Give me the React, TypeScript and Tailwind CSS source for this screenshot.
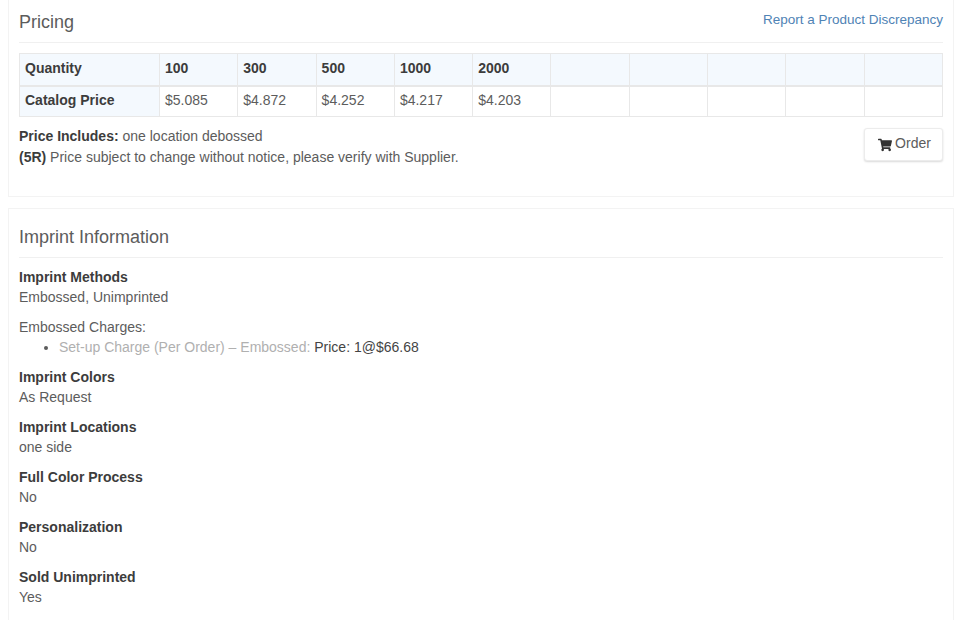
import { FaShoppingCart } from "react-icons/fa";

const QTY = ["100", "300", "500", "1000", "2000", "", "", "", "", ""];
const PRICES = ["$5.085", "$4.872", "$4.252", "$4.217", "$4.203", "", "", "", "", ""];

const INFO = [
  { label: "Imprint Colors", value: "As Request" },
  { label: "Imprint Locations", value: "one side" },
  { label: "Full Color Process", value: "No" },
  { label: "Personalization", value: "No" },
  { label: "Sold Unimprinted", value: "Yes" },
];

function Info({ label, value }: { label: string; value: string }) {
  return (
    <div className="mb-2.5 leading-[20px]">
      <div className="font-bold text-[#3c3c3c]">{label}</div>
      <div>{value}</div>
    </div>
  );
}

export default function App() {
  return (
    <div className="h-[620px] overflow-hidden bg-white pl-2 pr-[2px] font-['Liberation_Sans',Arial,sans-serif] text-[14px] text-[#5c5c5c]">
      {/* Pricing */}
      <div className="h-[197px] border border-t-0 border-[#f3f3f3] px-2.5">
        <div className="flex h-[43px] items-start justify-between border-b border-[#f0f0f0]">
          <h3 className="mt-[11px] text-[18px] leading-[23px]">Pricing</h3>
          <a href="#" className="mt-[10px] text-[13.5px] leading-[20px] text-[#4f83b5]">Report a Product Discrepancy</a>
        </div>
        <table className="mt-2.5 w-[924px] table-fixed border-collapse">
          <colgroup>
            <col className="w-[140px]" />
            {QTY.map((_, i) => <col key={i} />)}
          </colgroup>
          <tbody>
            <tr className="h-[32px] bg-[#f4f9fe] font-bold text-[#3c3c3c]">
              <td className="border border-b-2 border-[#e8e8e8] px-[5px] pb-[2px]">Quantity</td>
              {QTY.map((q, i) => (
                <td key={i} className="border border-b-2 border-[#e8e8e8] px-[5px] pb-[2px]">{q}</td>
              ))}
            </tr>
            <tr className="h-[31px]">
              <td className="border border-[#e8e8e8] bg-[#f4f9fe] px-[5px] pb-[2px] font-bold text-[#3c3c3c]">Catalog Price</td>
              {PRICES.map((p, i) => (
                <td key={i} className="border border-[#e8e8e8] px-[5px] pb-[2px]">{p}</td>
              ))}
            </tr>
          </tbody>
        </table>
        <div className="mt-[9px] flex items-start justify-between">
          <div className="leading-[21px]">
            <div><b className="text-[#3c3c3c]">Price Includes:</b> one location debossed</div>
            <div><b className="text-[#3c3c3c]">(5R)</b> Price subject to change without notice, please verify with Supplier.</div>
          </div>
          <button className="mt-[2px] flex h-[33px] w-[79px] items-center justify-center gap-[3px] rounded-[3px] border border-[#ececec] bg-white pb-[2px] pl-[2px] text-[#5c5c5c] shadow-[0_1px_2px_rgba(0,0,0,0.15)]">
            <FaShoppingCart className="mt-[2px] size-[14px] text-[#333]" />
            Order
          </button>
        </div>
      </div>

      {/* Imprint */}
      <div className="mt-[11px] h-[430px] border border-[#f3f3f3] px-2.5">
        <div className="flex h-[49px] items-start border-b border-[#f0f0f0]">
          <h3 className="mt-[17px] text-[18px] leading-[23px]">Imprint Information</h3>
        </div>
        <div className="mt-[9px]">
          <Info label="Imprint Methods" value="Embossed, Unimprinted" />
          <div className="mb-2.5 leading-[20px]">
            <div>Embossed Charges:</div>
            <ul className="list-disc pl-10">
              <li>
                <span className="text-[#b0b0b0]">Set-up Charge (Per Order) – Embossed:</span>{" "}
                <span className="text-[#444]">Price: 1@$66.68</span>
              </li>
            </ul>
          </div>
          {INFO.map(row => <Info key={row.label} {...row} />)}
        </div>
      </div>
    </div>
  );
}
